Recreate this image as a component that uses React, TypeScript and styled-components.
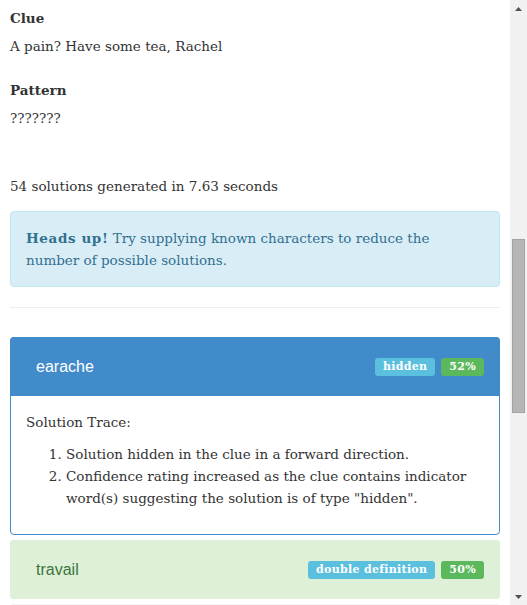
import { useLayoutEffect, useRef, useState } from 'react';
import styled, { createGlobalStyle } from 'styled-components';

type Tone = 'primary' | 'success' | 'default';

interface Solution {
  word: string;
  type: string;
  confidence: number;
  tone: Tone;
  trace?: string[];
}

const SOLUTIONS: Solution[] = [
  {
    word: 'earache',
    type: 'hidden',
    confidence: 52,
    tone: 'primary',
    trace: [
      'Solution hidden in the clue in a forward direction.',
      'Confidence rating increased as the clue contains indicator word(s) suggesting the solution is of type "hidden".',
    ],
  },
  { word: 'travail', type: 'double definition', confidence: 50, tone: 'success' },
  { word: 'anguish', type: 'double definition', confidence: 46, tone: 'default' },
  { word: 'torment', type: 'double definition', confidence: 44, tone: 'default' },
  { word: 'ailment', type: 'charade', confidence: 41, tone: 'default' },
  { word: 'chagrin', type: 'anagram', confidence: 37, tone: 'default' },
  { word: 'soreness', type: 'charade', confidence: 33, tone: 'default' },
  { word: 'cheater', type: 'anagram', confidence: 30, tone: 'default' },
  { word: 'teacher', type: 'anagram', confidence: 28, tone: 'default' },
  { word: 'hectare', type: 'anagram', confidence: 25, tone: 'default' },
];

const TONES: Record<Tone, { bg: string; border: string; text: string }> = {
  primary: { bg: '#428bca', border: '#428bca', text: '#ffffff' },
  success: { bg: '#dff0d8', border: '#d6e9c6', text: '#3c763d' },
  default: { bg: '#f5f5f5', border: '#dddddd', text: '#333333' },
};

const ARROW_SIZE = 17;

export default function App() {
  const scrollerRef = useRef<HTMLDivElement>(null);
  const resultsRef = useRef<HTMLDivElement>(null);
  const [thumb, setThumb] = useState({ top: 0, height: 0 });

  const updateThumb = () => {
    const el = scrollerRef.current;
    if (!el) return;
    const track = el.clientHeight - ARROW_SIZE * 2;
    setThumb({
      top: (el.scrollTop / el.scrollHeight) * track,
      height: (el.clientHeight / el.scrollHeight) * track,
    });
  };

  useLayoutEffect(() => {
    if (scrollerRef.current && resultsRef.current) {
      scrollerRef.current.scrollTop = resultsRef.current.offsetTop - 7;
    }
    updateThumb();
  }, []);

  return (
    <>
      <GlobalStyle />
      <Page>
        <Scroller ref={scrollerRef} onScroll={updateThumb}>
          <Navbar>
            <Brand>Cryptic Solver</Brand>
          </Navbar>
          <Container>
            <Intro>
              <Title>Cryptic Crossword Solver</Title>
              <Lead>
                Enter a cryptic clue and the pattern of the answer. Use a question mark for
                every unknown letter.
              </Lead>
              <FormGroup>
                <FieldLabel>Clue</FieldLabel>
                <Input defaultValue="A pain? Have some tea, Rachel" />
              </FormGroup>
              <FormGroup>
                <FieldLabel>Pattern</FieldLabel>
                <Input defaultValue="???????" />
              </FormGroup>
              <SolveButton>Solve</SolveButton>
            </Intro>

            <div ref={resultsRef}>
              <Field>
                <FieldLabel>Clue</FieldLabel>
                <FieldValue>A pain? Have some tea, Rachel</FieldValue>
              </Field>
              <Field>
                <FieldLabel>Pattern</FieldLabel>
                <FieldValue>???????</FieldValue>
              </Field>
            </div>

            <Summary>54 solutions generated in 7.63 seconds</Summary>

            <Alert>
              <AlertLead>Heads up!</AlertLead> Try supplying known characters to reduce the
              number of possible solutions.
            </Alert>

            <Divider />

            {SOLUTIONS.map((s) => (
              <Panel key={s.word} $tone={s.tone}>
                <PanelHeading $tone={s.tone}>
                  <PanelTitle>{s.word}</PanelTitle>
                  <Badges>
                    <Badge $color="#5bc0de">{s.type}</Badge>
                    <Badge $color="#5cb85c">{s.confidence}%</Badge>
                  </Badges>
                </PanelHeading>
                {s.trace && (
                  <PanelBody>
                    <p>Solution Trace:</p>
                    <TraceList>
                      {s.trace.map((t) => (
                        <li key={t}>{t}</li>
                      ))}
                    </TraceList>
                  </PanelBody>
                )}
              </Panel>
            ))}

            <Footer>Generated by the cryptic clue solver.</Footer>
          </Container>
        </Scroller>

        <ScrollBar>
          <ArrowButton>
            <svg width="7" height="4" viewBox="0 0 7 4">
              <polygon points="3.5,0 7,4 0,4" fill="#505050" />
            </svg>
          </ArrowButton>
          <Track>
            <Thumb style={{ marginTop: thumb.top, height: thumb.height }} />
          </Track>
          <ArrowButton>
            <svg width="7" height="4" viewBox="0 0 7 4">
              <polygon points="0,0 7,0 3.5,4" fill="#505050" />
            </svg>
          </ArrowButton>
        </ScrollBar>
      </Page>
    </>
  );
}

const GlobalStyle = createGlobalStyle`
  html, body {
    margin: 0;
    height: 100%;
    overflow: hidden;
  }

  body {
    background: #ffffff;
    color: #333333;
    font-family: "DejaVu Serif", Georgia, serif;
    font-size: 13.5px;
    line-height: 22px;
  }

  * {
    box-sizing: border-box;
  }
`;

const Page = styled.div`
  display: flex;
  height: 100vh;
`;

const Scroller = styled.div`
  flex: 1;
  min-width: 0;
  overflow-y: auto;
  scrollbar-width: none;

  &::-webkit-scrollbar {
    display: none;
  }
`;

const ScrollBar = styled.div`
  display: flex;
  flex-direction: column;
  flex-shrink: 0;

  width: 17px;

  background: #f1f1f1;
`;

const ArrowButton = styled.div`
  display: flex;
  justify-content: center;
  align-items: center;

  height: ${ARROW_SIZE}px;
`;

const Track = styled.div`
  flex: 1;
  overflow: hidden;
`;

const Thumb = styled.div`
  margin: 0 2px;
  border: 1px solid #a2a2a2;

  background: #b5b5b5;
`;

const Navbar = styled.div`
  display: flex;
  align-items: center;

  height: 50px;
  padding: 0 10px;

  background: #ffffff;
  border-bottom: 1px solid #dddddd;
`;

const Brand = styled.div`
  font-size: 18px;
  color: #333333;
`;

const Container = styled.div`
  padding: 0 10px;
`;

const Intro = styled.div`
  min-height: 672px;
  padding-top: 20px;
  margin-bottom: 60px;
`;

const Title = styled.h1`
  margin: 20px 0 10px;

  font-size: 28px;
  line-height: 36px;
`;

const Lead = styled.p`
  margin: 0 0 20px;
  font-size: 15px;
`;

const FormGroup = styled.div`
  margin-bottom: 15px;
`;

const Input = styled.input`
  display: block;

  width: 100%;
  height: 34px;
  padding: 6px 12px;
  border: 1px solid #cccccc;
  border-radius: 4px;

  font: inherit;
  color: #555555;
`;

const SolveButton = styled.button`
  height: 34px;
  padding: 0 16px;
  border: 1px solid #357ebd;
  border-radius: 4px;

  background: #428bca;

  font: inherit;
  color: #ffffff;
`;

const Field = styled.div`
  margin-bottom: 22px;
`;

const FieldLabel = styled.div`
  margin-bottom: 6px;
  font-weight: bold;
`;

const FieldValue = styled.div``;

const Summary = styled.p`
  margin: 46px 0 14px;
`;

const Alert = styled.div`
  padding: 15px;
  border: 1px solid #bce8f1;
  border-radius: 4px;

  background: #d9edf7;

  color: #31708f;
`;

const AlertLead = styled.strong`
  letter-spacing: 0.6px;
`;

const Divider = styled.hr`
  margin: 20px 0 29px;
  border: 0;
  border-top: 1px solid #eeeeee;
`;

const Panel = styled.div<{ $tone: Tone }>`
  margin-bottom: 5px;
  border: 1px solid ${(p) => TONES[p.$tone].border};
  border-radius: 4px;

  background: #ffffff;
`;

const PanelHeading = styled.div<{ $tone: Tone }>`
  display: flex;
  justify-content: space-between;
  align-items: center;

  margin: -1px -1px 0;
  padding: 21px 16px 20px 26px;
  border-radius: 4px 4px 0 0;

  background: ${(p) => TONES[p.$tone].bg};

  color: ${(p) => TONES[p.$tone].text};
  line-height: 18px;

  &:last-child {
    margin-bottom: -1px;
    border-radius: 4px;
  }
`;

const PanelTitle = styled.h3`
  margin: 0;

  font-family: "Liberation Sans", Arial, sans-serif;
  font-size: 16px;
  font-weight: normal;
`;

const Badges = styled.div`
  display: flex;
  gap: 6px;
`;

const Badge = styled.span<{ $color: string }>`
  display: inline-block;

  height: 18px;
  padding: 0 8px;
  border-radius: 3px;

  background: ${(p) => p.$color};

  font-size: 11px;
  font-weight: bold;
  line-height: 18px;
  letter-spacing: 0.3px;
  color: #ffffff;
  white-space: nowrap;
`;

const PanelBody = styled.div`
  padding: 15px;

  p {
    margin: 0 0 10px;
  }
`;

const TraceList = styled.ol`
  margin: 0 0 10px;
  padding-left: 40px;
`;

const Footer = styled.footer`
  margin-top: 40px;
  padding: 20px 0 22px;
  border-top: 1px solid #eeeeee;

  color: #777777;
`;
